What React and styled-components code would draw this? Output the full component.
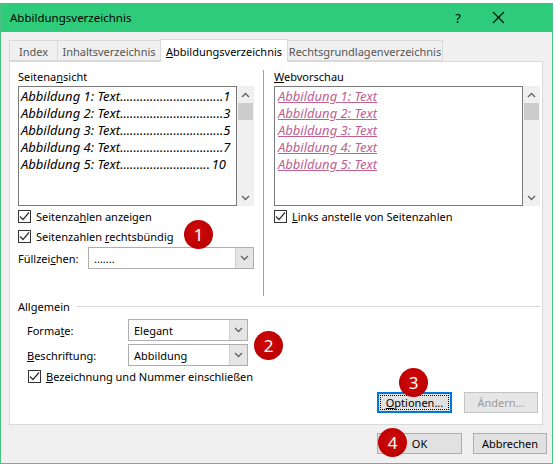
import React from 'react'
import styled, { createGlobalStyle } from 'styled-components'

const GlobalStyle = createGlobalStyle`
  html, body {
    margin: 0;
    padding: 0;
    background: #ffffff;
  }
  body {
    font-family: "Noto Sans", "Open Sans", sans-serif;
    font-size: 11px;
    color: #000;
  }
`;

const Page = styled.div`
  width: 556px;
  height: 464px;
  padding-top: 3px;
  box-sizing: border-box;
  overflow: hidden;
`;

const Window = styled.div`
  position: relative;
  width: 553px;
  height: 461px;
  box-sizing: border-box;
  border: 1px solid #4cc385;
  border-top: none;
  background: #f0f0f0;
  display: flex;
  flex-direction: column;
`;

const TitleBar = styled.div`
  height: 29px;
  background: #2ecc7a;
  display: flex;
  align-items: center;
  padding-left: 9px;
  padding-right: 34px;
  color: #000;
`;

const Title = styled.div`
  flex: 1;
  font-size: 11.5px;
`;

const TitleButton = styled.div`
  width: 40px;
  display: flex;
  justify-content: center;
  align-items: center;
  font-size: 13px;
`;

const TabRow = styled.div`
  display: flex;
  align-items: flex-end;
  margin: 6px 0 0 8px;
  height: 23px;
  position: relative;
  z-index: 1;
`;

const Tab = styled.div`
  height: ${p => (p.$active ? '23px' : '21px')};
  box-sizing: border-box;
  width: ${p => p.$w}px;
  margin-bottom: ${p => (p.$active ? '-1px' : '0')};
  border: 1px solid #d9d9d9;
  border-bottom: ${p => (p.$active ? 'none' : '1px solid #d9d9d9')};
  border-left: ${p => (p.$first || p.$active ? '1px solid #d9d9d9' : 'none')};
  border-right: ${p => (p.$beforeActive ? 'none' : '1px solid #d9d9d9')};
  background: ${p => (p.$active ? '#ffffff' : '#f0f0f0')};
  color: ${p => (p.$active ? '#000' : '#555')};
  display: flex;
  align-items: center;
  justify-content: center;
  padding-top: ${p => (p.$active ? '0' : '1px')};
  white-space: nowrap;
`;

const Panel = styled.div`
  position: relative;
  margin-left: 8px;
  width: 534px;
  height: 364px;
  box-sizing: border-box;
  background: #ffffff;
  border: 1px solid #d9d9d9;
  display: flex;
  flex-direction: column;
`;

const TopSection = styled.div`
  display: flex;
  padding: 7px 0 0 8px;
  height: 235px;
  box-sizing: border-box;
`;

const Column = styled.div`
  width: ${p => p.$w}px;
  display: flex;
  flex-direction: column;
`;

const VSep = styled.div`
  width: 1px;
  background: #a0a0a0;
  margin: 1px 10px 0 9px;
  height: 226px;
`;

const Label = styled.div`
  height: 16px;
  line-height: 16px;
  margin-bottom: 1px;
  white-space: nowrap;
`;

const ListBox = styled.div`
  display: flex;
  height: 120px;
`;

const ListArea = styled.div`
  flex: 1;
  min-width: 0;
  border: 1px solid #7a7a7a;
  padding: 1px 0 0 2px;
`;

const ListItem = styled.div`
  display: flex;
  justify-content: space-between;
  height: 17px;
  line-height: 17px;
  font-style: italic;
  font-size: 13px;
  padding-right: 10px;
  white-space: nowrap;
`;

const LinkItem = styled.div`
  height: 17px;
  line-height: 17px;
  font-style: italic;
  font-size: 13px;
  color: #c0608f;
  text-decoration: underline;
  padding-left: 1px;
`;

const Scrollbar = styled.div`
  width: 17px;
  background: #f0f0f0;
  display: flex;
  flex-direction: column;
  align-items: center;
`;

const ScrollArrow = styled.div`
  height: 17px;
  width: 17px;
  display: flex;
  align-items: center;
  justify-content: center;
`;

const Thumb = styled.div`
  width: 15px;
  height: 17px;
  background: #cdcdcd;
`;

const ScrollSpacer = styled.div`
  flex: 1;
`;

const CheckRow = styled.label`
  display: flex;
  align-items: center;
  height: 20px;
  gap: 5px;
  margin-left: ${p => p.$indent || 0}px;
  white-space: nowrap;
`;

const Box = styled.span`
  width: 13px;
  height: 13px;
  box-sizing: border-box;
  border: 1px solid #333;
  background: #fff;
  display: flex;
  align-items: center;
  justify-content: center;
`;

const FieldRow = styled.div`
  display: flex;
  align-items: center;
  height: ${p => p.$h || 22}px;
  margin-left: ${p => p.$indent || 0}px;
  margin-top: ${p => p.$mt || 0}px;
`;

const FieldLabel = styled.div`
  width: ${p => p.$w}px;
  white-space: nowrap;
`;

const Combo = styled.div`
  width: ${p => p.$w}px;
  height: 22px;
  box-sizing: border-box;
  border: 1px solid #adadad;
  background: #fff;
  display: flex;
  align-items: stretch;
`;

const ComboText = styled.div`
  flex: 1;
  padding-left: 5px;
  display: flex;
  align-items: center;
`;

const ComboButton = styled.div`
  width: 17px;
  background: #e5e5e5;
  border-left: 1px solid #cfcfcf;
  display: flex;
  align-items: center;
  justify-content: center;
`;

const Group = styled.div`
  display: flex;
  flex-direction: column;
  padding-left: 8px;
`;

const GroupHeader = styled.div`
  display: flex;
  align-items: center;
  height: 18px;
  gap: 6px;
`;

const GroupLine = styled.div`
  flex: 1;
  height: 1px;
  background: #dcdcdc;
  margin-right: 1px;
`;

const ButtonRow = styled.div`
  display: flex;
  justify-content: flex-end;
  gap: ${p => p.$gap || 11}px;
  margin: ${p => p.$m || '0'};
`;

const Button = styled.div`
  width: ${p => p.$w}px;
  height: 21px;
  box-sizing: border-box;
  border: ${p => (p.$focus ? '2px solid #0078d7' : '1px solid #adadad')};
  background: ${p => (p.$disabled ? '#e6e6e6' : '#e1e1e1')};
  color: ${p => (p.$disabled ? '#9a9a9a' : '#000')};
  border-color: ${p => (p.$disabled ? '#c4c4c4' : undefined)};
  display: flex;
  align-items: center;
  justify-content: center;
  padding: 1px;
`;

const FocusInner = styled.div`
  width: 100%;
  height: 100%;
  border: 1px dotted #000;
  box-sizing: border-box;
  display: flex;
  align-items: center;
  justify-content: center;
`;

const Badge = styled.div`
  position: absolute;
  left: ${p => p.$x - 14}px;
  top: ${p => p.$y - 14}px;
  width: 29px;
  height: 29px;
  border-radius: 50%;
  background: radial-gradient(circle at 45% 40%, #d00a0a 0%, #bb0000 70%, #a80000 100%);
  color: #fff;
  font-size: 17px;
  display: flex;
  align-items: center;
  justify-content: center;
  z-index: 5;
`;

const Chevron = ({ up }) => (
  <svg width="9" height="6" viewBox="0 0 9 6">
    <polyline
      points={up ? '1,5 4.5,1.5 8,5' : '1,1 4.5,4.5 8,1'}
      fill="none"
      stroke="#606060"
      strokeWidth="1.3"
    />
  </svg>
);

const Check = () => (
  <svg width="11" height="11" viewBox="0 0 11 11">
    <polyline points="1,5.5 4,8.5 10,1.5" fill="none" stroke="#333" strokeWidth="1.2" />
  </svg>
);

const CheckBox = ({ indent, children }) => (
  <CheckRow $indent={indent}>
    <Box>
      <Check />
    </Box>
    <span>{children}</span>
  </CheckRow>
);

const ScrollBarV = () => (
  <Scrollbar>
    <ScrollArrow><Chevron up /></ScrollArrow>
    <Thumb />
    <ScrollSpacer />
    <ScrollArrow><Chevron /></ScrollArrow>
  </Scrollbar>
);

const DropDown = ({ w, children }) => (
  <Combo $w={w}>
    <ComboText>{children}</ComboText>
    <ComboButton><Chevron /></ComboButton>
  </Combo>
);

// figure number, page, number of leader dots
const previewRows = [
  ['1', '1', 31],
  ['2', '3', 31],
  ['3', '5', 31],
  ['4', '7', 31],
  ['5', '10', 27],
];

export default function App() {
  return (
    <Page>
      <GlobalStyle />
      <Window>
        <TitleBar>
          <Title>Abbildungsverzeichnis</Title>
          <TitleButton>?</TitleButton>
          <TitleButton>
            <svg width="13" height="13" viewBox="0 0 13 13">
              <path d="M1 1 L12 12 M12 1 L1 12" stroke="#000" strokeWidth="1.1" />
            </svg>
          </TitleButton>
        </TitleBar>

        <TabRow>
          <Tab $w={49} $first>Index</Tab>
          <Tab $w={102} $beforeActive>Inhaltsverzeichnis</Tab>
          <Tab $w={128} $active><span><u>A</u>bbildungsverzeichnis</span></Tab>
          <Tab $w={155}>Rechtsgrundlagenverzeichnis</Tab>
        </TabRow>

        <Panel>
          <TopSection>
            <Column $w={236}>
              <Label>Seitena<u>n</u>sicht</Label>
              <ListBox>
                <ListArea>
                  {previewRows.map(([n, p, d]) => (
                    <ListItem key={n}>
                      <span>Abbildung {n}: Text{'.'.repeat(d)}</span>
                      <span>{p}</span>
                    </ListItem>
                  ))}
                </ListArea>
                <ScrollBarV />
              </ListBox>
              <CheckBox>Seitenza<u>h</u>len anzeigen</CheckBox>
              <CheckBox>Seitenzahlen <u>r</u>echtsbündig</CheckBox>
              <FieldRow $mt={1}>
                <FieldLabel $w={70}>Füllzei<u>c</u>hen:</FieldLabel>
                <DropDown w={166}>.......</DropDown>
              </FieldRow>
            </Column>
            <VSep />
            <Column $w={266}>
              <Label><u>W</u>ebvorschau</Label>
              <ListBox>
                <ListArea>
                  {previewRows.map(([n]) => (
                    <LinkItem key={n}>Abbildung {n}: Text</LinkItem>
                  ))}
                </ListArea>
                <ScrollBarV />
              </ListBox>
              <CheckBox><u>L</u>inks anstelle von Seitenzahlen</CheckBox>
            </Column>
          </TopSection>

          <Group>
            <GroupHeader>
              <span>Allgemein</span>
              <GroupLine />
            </GroupHeader>
            <FieldRow $indent={9} $mt={4}>
              <FieldLabel $w={101}>Forma<u>t</u>e:</FieldLabel>
              <DropDown w={120}>Elegant</DropDown>
            </FieldRow>
            <FieldRow $indent={9} $mt={3}>
              <FieldLabel $w={101}><u>B</u>eschriftung:</FieldLabel>
              <DropDown w={120}>Abbildung</DropDown>
            </FieldRow>
            <CheckBox indent={10}><u>B</u>ezeichnung und Nummer einschließen</CheckBox>
          </Group>

          <ButtonRow $gap={12} $m="6px 4px 0 0">
            <Button $w={75} $focus>
              <FocusInner><span><u>O</u>ptionen...</span></FocusInner>
            </Button>
            <Button $w={74} $disabled>Ändern...</Button>
          </ButtonRow>
        </Panel>

        <ButtonRow $gap={11} $m="8px 5px 0 0">
          <Button $w={85}>OK</Button>
          <Button $w={74}>Abbrechen</Button>
        </ButtonRow>

        <Badge $x={197} $y={231}>1</Badge>
        <Badge $x={267} $y={342}>2</Badge>
        <Badge $x={412} $y={379}>3</Badge>
        <Badge $x={391} $y={439}>4</Badge>
      </Window>
    </Page>
  )
}
